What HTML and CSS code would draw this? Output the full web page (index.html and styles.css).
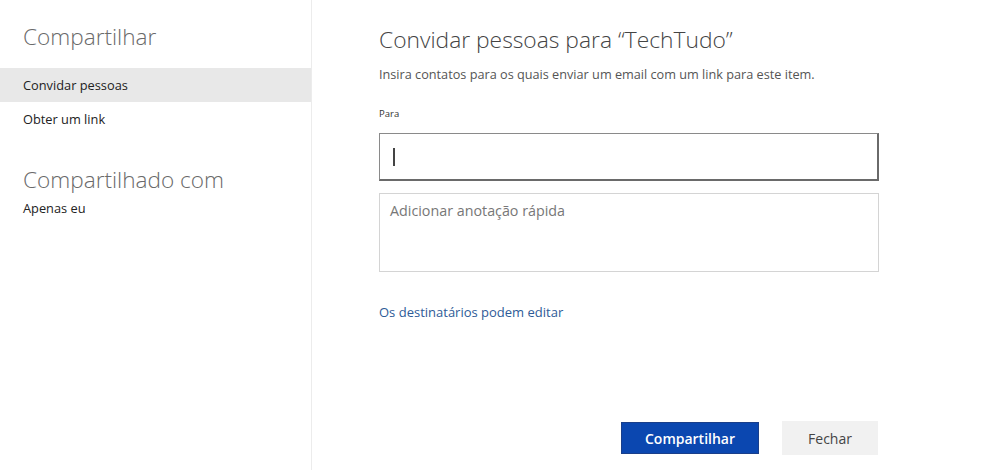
FILE: index.html
```html
<!DOCTYPE html>
<html lang="pt">
<head>
<meta charset="utf-8">
<title>Compartilhar</title>
<link rel="stylesheet" href="styles.css">
</head>
<body>
<div class="dialog">
  <aside class="side">
    <h2 class="side-title">Compartilhar</h2>
    <nav class="side-nav">
      <div class="side-item active">Convidar pessoas</div>
      <div class="side-item">Obter um link</div>
    </nav>
    <h2 class="side-title shared">Compartilhado com</h2>
    <div class="side-sub">Apenas eu</div>
  </aside>
  <main class="main">
    <h1 class="main-title">Convidar pessoas para “TechTudo”</h1>
    <p class="desc">Insira contatos para os quais enviar um email com um link para este item.</p>
    <label class="label">Para</label>
    <div class="to-box"><span class="caret"></span></div>
    <div class="note-box">Adicionar anotação rápida</div>
    <a class="perm">Os destinatários podem editar</a>
    <div class="actions">
      <button class="btn primary">Compartilhar</button>
      <button class="btn secondary">Fechar</button>
    </div>
  </main>
</div>
</body>
</html>
```
FILE: styles.css
```css
html, body {
  margin: 0;
  padding: 0;
  background: #fff;
}
body {
  font-family: "Open Sans", "Noto Sans", sans-serif;
  color: #333;
  width: 984px;
  height: 470px;
  overflow: hidden;
}
.dialog {
  display: flex;
  height: 470px;
}
.side {
  width: 311px;
  border-right: 1px solid #ececec;
  box-sizing: content-box;
  padding-top: 22px;
}
.side-title {
  margin: 0 0 0 23px;
  font-weight: 300;
  font-size: 22.6px;
  line-height: 30px;
  color: #6a6a6a;
}
.side-title.shared {
  margin-top: 29px;
}
.side-nav {
  margin-top: 16px;
}
.side-item {
  height: 34px;
  line-height: 34px;
  padding-left: 23px;
  font-size: 12.8px;
  color: #222;
}
.side-item.active {
  background: #e8e8e8;
}
.side-sub {
  margin-top: 5px;
  padding-left: 23px;
  font-size: 12.8px;
  color: #222;
  line-height: 16px;
}
.main {
  flex: 1;
  padding: 24px 0 0 67px;
  display: flex;
  flex-direction: column;
  align-items: flex-start;
}
.main-title {
  margin: 0;
  font-weight: 300;
  font-size: 22.8px;
  line-height: 32px;
  color: #444;
}
.desc {
  margin: 10px 0 0;
  font-size: 12.7px;
  line-height: 16px;
  color: #555;
}
.label {
  margin-top: 26px;
  font-size: 9.5px;
  line-height: 12px;
  color: #333;
}
.to-box {
  box-sizing: border-box;
  margin-top: 13px;
  width: 500px;
  height: 48px;
  border-style: solid;
  border-width: 1px 2px 2px 1px;
  border-color: #8a8a8a #6a6a6a #6a6a6a #8a8a8a;
  display: flex;
  align-items: center;
  padding-left: 13px;
}
.caret {
  width: 2px;
  height: 18px;
  background: #444;
}
.note-box {
  box-sizing: border-box;
  margin-top: 12px;
  width: 500px;
  height: 79px;
  border: 1.5px solid #d4d4d4;
  padding: 8px 0 0 10px;
  font-size: 14.3px;
  line-height: 18px;
  color: #777;
}
.perm {
  margin-top: 32px;
  font-size: 13px;
  line-height: 16px;
  color: #2e5b97;
}
.actions {
  margin-top: 101px;
  display: flex;
  align-items: center;
  gap: 23px;
  margin-left: 242px;
}
.btn {
  font-family: "Open Sans", "Noto Sans", sans-serif;
  font-size: 14px;
  border: none;
  padding: 0;
}
.btn.primary {
  width: 138px;
  height: 32px;
  background: #0b47b0;
  color: #fff;
  font-weight: 600;
  border: 1px solid #1a3f8a;
}
.btn.secondary {
  width: 96px;
  height: 34px;
  background: #f1f1f1;
  color: #444;
}
```
